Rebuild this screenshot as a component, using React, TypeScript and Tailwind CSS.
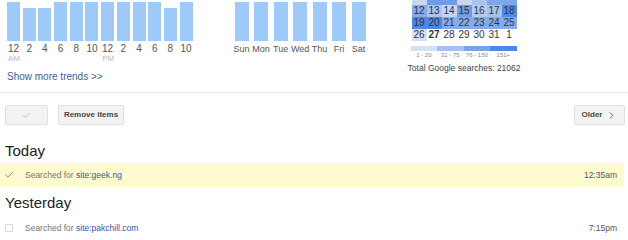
import { Check, ChevronRight } from 'lucide-react'

const hours = [
  { label: '12', tall: true, sub: 'AM' },
  { label: '2', tall: false },
  { label: '4', tall: false },
  { label: '6', tall: true },
  { label: '8', tall: true },
  { label: '10', tall: true },
  { label: '12', tall: true, sub: 'PM' },
  { label: '2', tall: true },
  { label: '4', tall: true },
  { label: '6', tall: true },
  { label: '8', tall: false },
  { label: '10', tall: true },
]

const days = ['Sun', 'Mon', 'Tue', 'Wed', 'Thu', 'Fri', 'Sat']

const topRow = ['bg-[#c9d8f2]', 'bg-[#6f9ce6]', 'bg-[#6f9ce6]', 'bg-[#c9d8f2]', 'bg-[#a9c3ee]', 'bg-[#7fa6e9]', 'bg-[#7fa6e9]']

const weeks = [
  [
    { d: '12', c: 'bg-[#86abea]' },
    { d: '13', c: 'bg-[#aac4ef]' },
    { d: '14', c: 'bg-[#c4d6f3]' },
    { d: '15', c: 'bg-[#6d9be7]' },
    { d: '16', c: 'bg-[#b3cbf0]' },
    { d: '17', c: 'bg-[#a6c1ee]' },
    { d: '18', c: 'bg-[#5088e6]' },
  ],
  [
    { d: '19', c: 'bg-[#4f87e6]' },
    { d: '20', c: 'bg-[#4f87e6]' },
    { d: '21', c: 'bg-[#86abea]' },
    { d: '22', c: 'bg-[#86abea]' },
    { d: '23', c: 'bg-[#86abea]' },
    { d: '24', c: 'bg-[#86abea]' },
    { d: '25', c: 'bg-[#86abea]' },
  ],
  [
    { d: '26', c: 'bg-[#d4e0f4]' },
    { d: '27', c: 'bg-white font-bold' },
    { d: '28', c: 'bg-white' },
    { d: '29', c: 'bg-white' },
    { d: '30', c: 'bg-white' },
    { d: '31', c: 'bg-white' },
    { d: '1', c: 'bg-white' },
  ],
]

const legend = [
  { t: '1 - 20', c: 'bg-[#d4e0f4]' },
  { t: '31 - 75', c: 'bg-[#a6c1ee]' },
  { t: '76 - 150', c: 'bg-[#7ba3e9]' },
  { t: '151+', c: 'bg-[#4f87e6]' },
]

function Button({ children, className }: { children: React.ReactNode; className: string }) {
  return (
    <div
      className={`h-[20px] flex items-center justify-center rounded-[2px] border border-[#e0e0e0] bg-[#f3f3f3] text-[8px] font-bold text-[#444] ${className}`}
    >
      {children}
    </div>
  )
}

export default function App() {
  return (
    <div className="w-[628px] h-[240px] bg-white overflow-hidden font-['Liberation_Sans',Arial,sans-serif] text-[#333]">
      {/* trends */}
      <div className="h-[93px] flex border-b border-[#ececec]">
        <div className="ml-[7px] flex flex-col">
          <div className="h-[41px] flex items-end gap-[2.7px]">
            {hours.map((h, i) => (
              <div key={i} className={`w-[13px] bg-[#9dcaf9] ${h.tall ? 'h-[39px]' : 'h-[33px]'}`} />
            ))}
          </div>
          <div className="flex gap-[2.7px] mt-[2px]">
            {hours.map((h, i) => (
              <div key={i} className="w-[13px] flex flex-col items-center">
                <span className="text-[10px] leading-[12px] text-[#555] whitespace-nowrap">{h.label}</span>
                <span className="text-[8px] leading-[8px] h-[8px] text-[#bbb] w-[13px] text-left pl-[1px]">{h.sub ?? ''}</span>
              </div>
            ))}
          </div>
          <div className="mt-[8px] text-[10px] leading-[12px] text-[#3f5c9a] whitespace-nowrap">Show more trends &gt;&gt;</div>
        </div>

        <div className="ml-[42px] flex flex-col">
          <div className="h-[41px] flex items-end gap-[5.5px]">
            {days.map((d) => (
              <div key={d} className="w-[14px] h-[39px] bg-[#9dcaf9]" />
            ))}
          </div>
          <div className="flex gap-[5.5px] mt-[2px]">
            {days.map((d) => (
              <div key={d} className="w-[14px] flex justify-center">
                <span className="text-[9px] leading-[12px] text-[#555] whitespace-nowrap">{d}</span>
              </div>
            ))}
          </div>
        </div>

        <div className="ml-[46px] w-[105px] flex flex-col">
          <div className="grid grid-cols-7 h-[5px]">
            {topRow.map((c, i) => (
              <div key={i} className={c} />
            ))}
          </div>
          {weeks.map((w, i) => (
            <div key={i} className="grid grid-cols-7">
              {w.map((cell) => (
                <div
                  key={cell.d}
                  className={`h-[12px] flex items-center justify-center text-[10px] leading-[12px] text-[#333] ${cell.c}`}
                >
                  {cell.d}
                </div>
              ))}
            </div>
          ))}
          <div className="mt-[5px] grid grid-cols-4 -ml-[1px]">
            {legend.map((l) => (
              <div key={l.t} className="flex flex-col items-center">
                <div className={`w-full h-[5px] ${l.c}`} />
                <span className="text-[6px] leading-[8px] text-[#888] whitespace-nowrap">{l.t}</span>
              </div>
            ))}
          </div>
          <div className="mt-[3px] flex justify-center">
            <span className="text-[8.5px] leading-[12px] text-[#444] whitespace-nowrap">Total Google searches: 21062</span>
          </div>
        </div>
      </div>

      {/* actions */}
      <div className="flex items-center mt-[12px] px-[5px]">
        <Button className="w-[43px]">
          <Check className="w-[9px] h-[9px] text-[#aaa]" strokeWidth={2} />
        </Button>
        <Button className="w-[66px] ml-[10px]">Remove items</Button>
        <div className="flex-1" />
        <Button className="w-[51px] mr-[-2px] gap-[4px]">
          Older
          <ChevronRight className="w-[11px] h-[11px] text-[#555]" strokeWidth={2} />
        </Button>
      </div>

      {/* history */}
      <div className="mt-[17px] pl-[5px] text-[15px] leading-[18px] text-[#222]">Today</div>
      <div className="mt-[3px] mr-[4px] h-[24px] bg-[#fffbd1] flex items-center">
        <Check className="ml-[4px] w-[10px] h-[10px] text-[#666]" strokeWidth={2} />
        <span className="ml-[11px] text-[8.5px] text-[#777]">
          Searched for <span className="text-[#3a55a0]">site:geek.ng</span>
        </span>
        <span className="ml-auto mr-[7px] text-[8.5px] text-[#555]">12:35am</span>
      </div>
      <div className="mt-[7px] pl-[5px] text-[15px] leading-[18px] text-[#222]">Yesterday</div>
      <div className="mt-[4px] mr-[4px] h-[24px] flex items-center">
        <div className="ml-[5px] w-[8px] h-[8px] border border-[#ddd]" />
        <span className="ml-[12px] text-[8.5px] text-[#777]">
          Searched for <span className="text-[#3a55a0]">site:pakchill.com</span>
        </span>
        <span className="ml-auto mr-[7px] text-[8.5px] text-[#555]">7:15pm</span>
      </div>
    </div>
  )
}
